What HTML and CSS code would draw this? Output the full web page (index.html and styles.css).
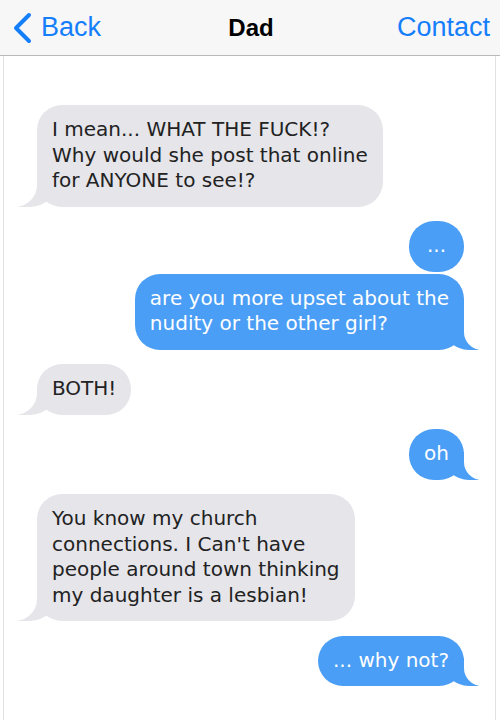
FILE: index.html
```html
<!DOCTYPE html>
<html lang="en">
<head>
  <meta charset="UTF-8" />
  <title>Dad</title>
  <link rel="stylesheet" href="styles.css">
</head>
<body>
  <header class="nav">
    <a class="nav-back" href="#">
      <svg class="chevron" width="22" height="32" viewBox="0 0 22 32">
        <polyline points="17,3 4,16 17,29" fill="none" stroke="#157efb" stroke-width="4" stroke-linecap="round" stroke-linejoin="round" />
      </svg>
      <span>Back</span>
    </a>
    <div class="nav-title">Dad</div>
    <a class="nav-contact" href="#">Contact</a>
  </header>

  <main class="thread">
    <div class="msg in tail">I mean... WHAT THE FUCK!?<br>Why would she post that online<br>for ANYONE to see!?</div>
    <div class="msg out dots">...</div>
    <div class="msg out tail">are you more upset about the<br>nudity or the other girl?</div>
    <div class="msg in tail">BOTH!</div>
    <div class="msg out tail">oh</div>
    <div class="msg in tail">You know my church<br>connections. I Can't have<br>people around town thinking<br>my daughter is a lesbian!</div>
    <div class="msg out tail">... why not?</div>
  </main>
</body>
</html>
```

FILE: styles.css
```css
* {
  box-sizing: border-box;
}
body {
  margin: 0;
  background: #fff;
  font-family: "DejaVu Sans", Verdana, sans-serif;
}

/* top bar */
.nav {
  display: flex;
  align-items: center;
  justify-content: space-between;
  height: 56px;
  padding: 0 10px 0 12px;
  background: #f7f7f7;
  border-bottom: 1px solid #b9b9b9;
  font-family: "Liberation Sans", Arial, sans-serif;
}
.nav a {
  color: #157efb;
  text-decoration: none;
  font-size: 27px;
}
.nav-back {
  display: flex;
  align-items: center;
  gap: 7px;
  width: 120px;
}
.nav-title {
  font-size: 24px;
  font-weight: bold;
  color: #000;
}
.nav-contact {
  width: 120px;
  text-align: right;
}

/* messages */
.thread {
  display: flex;
  flex-direction: column;
  margin: 0 4px 0 3px;
  padding: 49px 31px 40px 33px;
  min-height: 664px;
  border-left: 1px solid #e2e2e2;
  border-right: 1px solid #e2e2e2;
}
.msg {
  position: relative;
  padding: 12px 15px 13px;
  margin-bottom: 14.5px;
  border-radius: 25px;
  font-size: 20px;
  line-height: 25.5px;
}
.msg.in {
  align-self: flex-start;
  background: #e5e5ea;
  color: #222;
}
.msg.out {
  align-self: flex-end;
  background: #4a9ef5;
  color: #fff;
}
.msg.dots {
  width: 55px;
  margin-bottom: 2px;
  padding: 12px 0 13px;
  text-align: center;
}

/* bubble tails, drawn behind the bubble */
.msg.tail::before,
.msg.tail::after {
  content: "";
  position: absolute;
  bottom: 0;
  height: 28px;
  z-index: -1;
}
.msg.in.tail::before {
  left: -19px;
  width: 40px;
  background: #e5e5ea;
  border-bottom-right-radius: 28px;
}
.msg.in.tail::after {
  left: -26px;
  width: 26px;
  background: #fff;
  border-bottom-right-radius: 22px;
}
.msg.out.tail::before {
  right: -15px;
  width: 36px;
  background: #4a9ef5;
  border-bottom-left-radius: 26px;
}
.msg.out.tail::after {
  right: -22px;
  width: 22px;
  background: #fff;
  border-bottom-left-radius: 18px;
}
```
